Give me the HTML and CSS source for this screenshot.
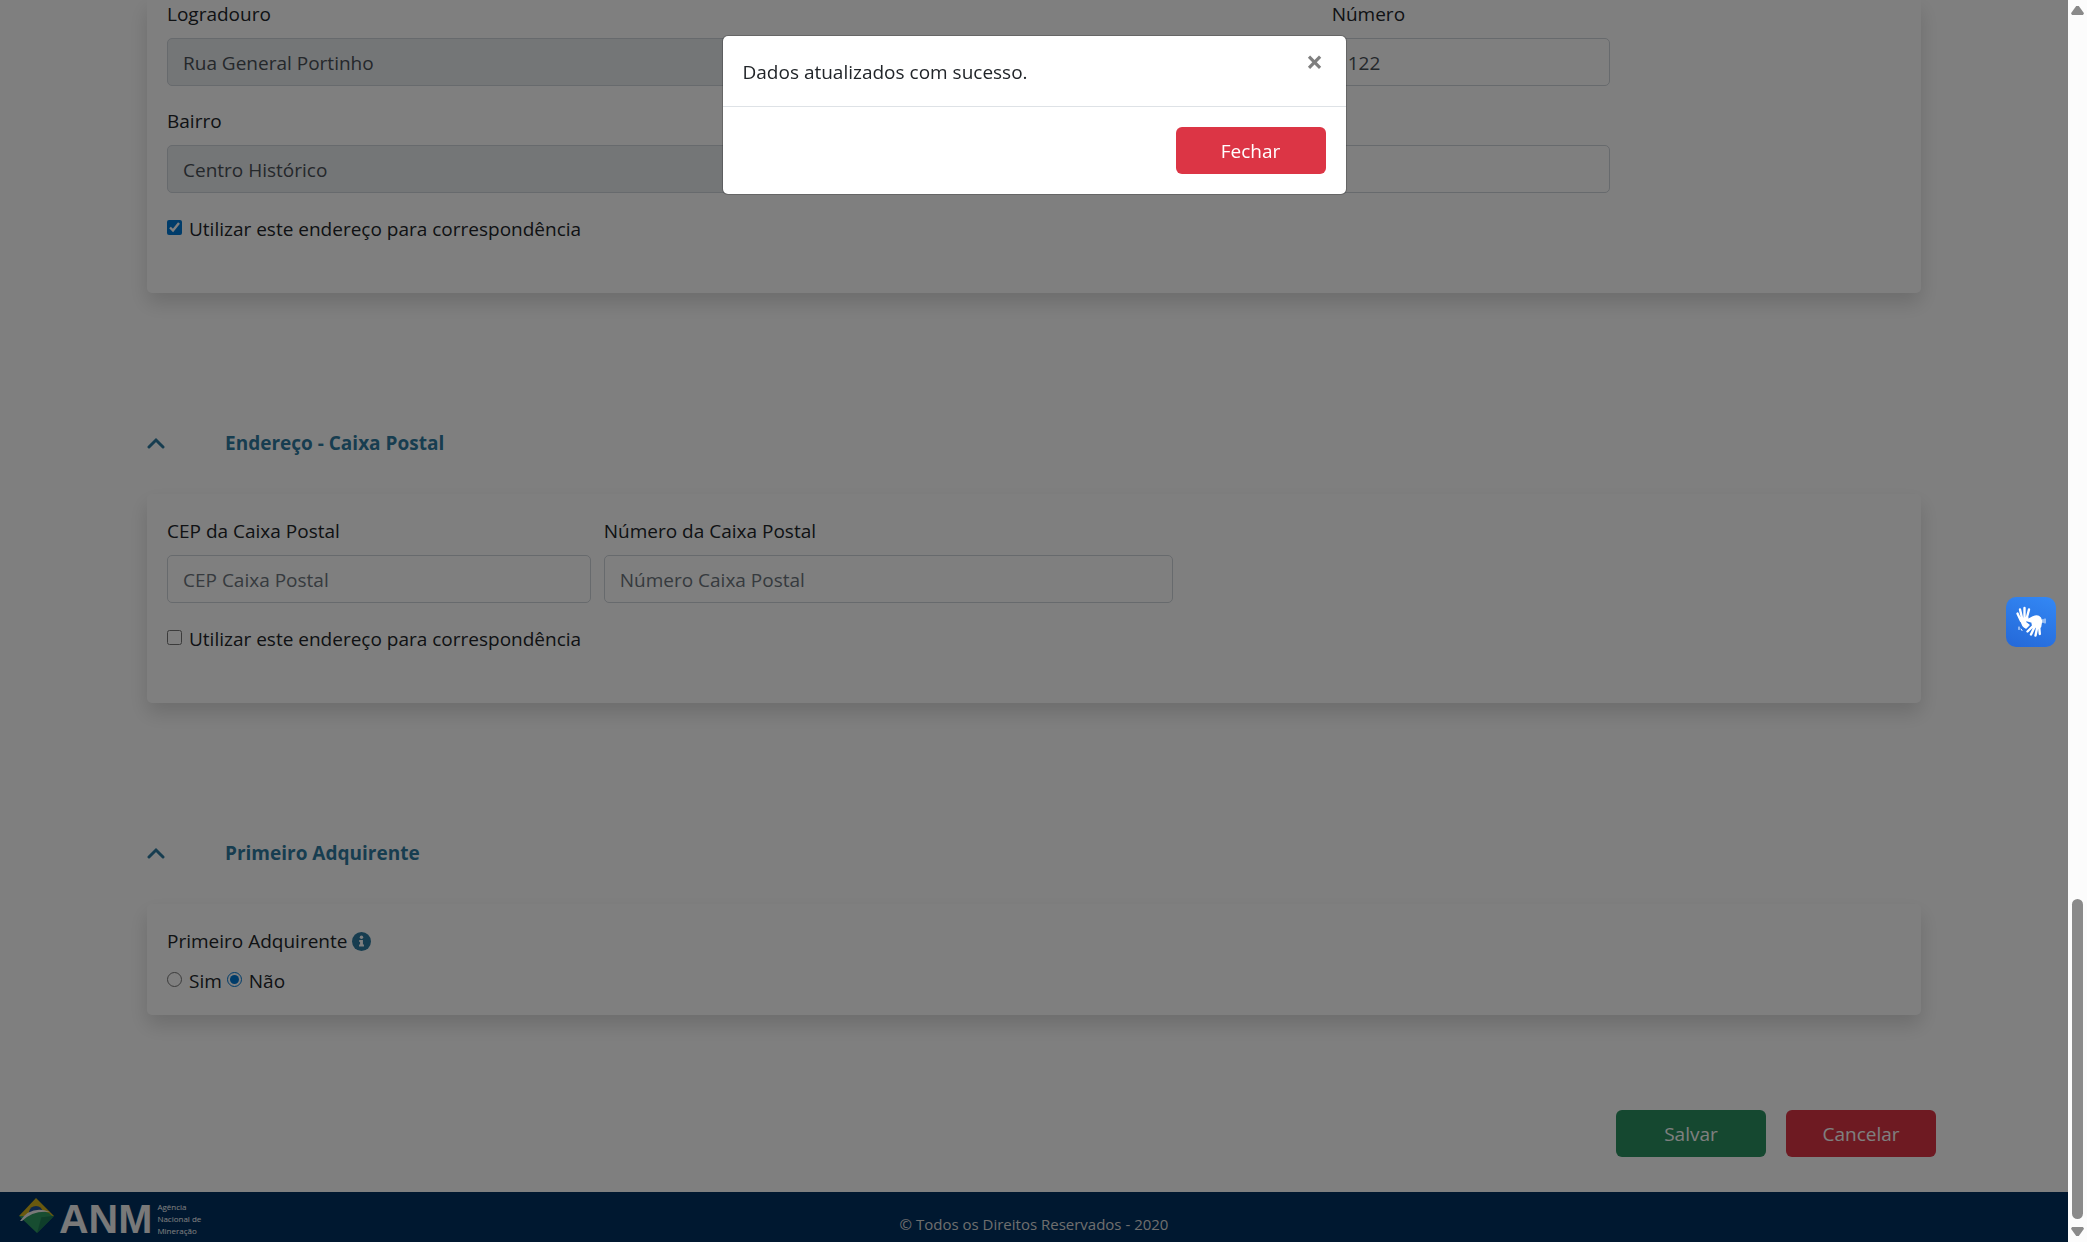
FILE: index.html
```html
<!DOCTYPE html>
<html lang="pt-BR">
<head>
  <meta charset="UTF-8">
  <title>ANM - Dados Cadastrais</title>
  <meta name="viewport" content="width=device-width, initial-scale=1.0">
  <link rel="stylesheet" href="styles.css">
</head>
<body>
<main class="content">

  <!-- Endereço -->
  <section class="card card-address">
    <div class="form-row">
      <div class="field col-8">
        <label for="logradouro">Logradouro</label>
        <input type="text" id="logradouro" class="form-control" value="Rua General Portinho" disabled>
      </div>
      <div class="field col-2">
        <label for="numero">Número</label>
        <input type="text" id="numero" class="form-control" value="122">
      </div>
    </div>
    <div class="form-row">
      <div class="field col-6">
        <label for="bairro">Bairro</label>
        <input type="text" id="bairro" class="form-control" value="Centro Histórico" disabled>
      </div>
      <div class="field col-4">
        <label for="complemento">Complemento</label>
        <input type="text" id="complemento" class="form-control">
      </div>
    </div>
    <div class="check">
      <input type="checkbox" id="corresp-endereco" checked>
      <label for="corresp-endereco">Utilizar este endereço para correspondência</label>
    </div>
  </section>

  <!-- Caixa Postal -->
  <h2 class="section-title">
    <svg class="chevron" viewBox="0 0 18 12"><path d="M2 10 L9 3 L16 10"/></svg>
    Endereço - Caixa Postal
  </h2>
  <section class="card">
    <div class="form-row">
      <div class="field col-3">
        <label for="cep-caixa">CEP da Caixa Postal</label>
        <input type="text" id="cep-caixa" class="form-control" placeholder="CEP Caixa Postal">
      </div>
      <div class="field col-4">
        <label for="numero-caixa">Número da Caixa Postal</label>
        <input type="text" id="numero-caixa" class="form-control" placeholder="Número Caixa Postal">
      </div>
    </div>
    <div class="check">
      <input type="checkbox" id="corresp-caixa">
      <label for="corresp-caixa">Utilizar este endereço para correspondência</label>
    </div>
  </section>

  <!-- Primeiro Adquirente -->
  <h2 class="section-title">
    <svg class="chevron" viewBox="0 0 18 12"><path d="M2 10 L9 3 L16 10"/></svg>
    Primeiro Adquirente
  </h2>
  <section class="card card-buyer">
    <div class="buyer-label">
      Primeiro Adquirente
      <svg class="info" viewBox="0 0 20 20">
        <circle cx="10" cy="10" r="10" fill="#2f7ba0"/>
        <circle cx="10" cy="5.6" r="1.8" fill="#fff"/>
        <path d="M7.6 8.4h3.9v4.8h1.1v2H7.4v-2h1.1v-2.8h-.9z" fill="#fff"/>
      </svg>
    </div>
    <div class="radios">
      <input type="radio" name="adquirente" id="adq-sim">
      <label for="adq-sim">Sim</label>
      <input type="radio" name="adquirente" id="adq-nao" checked>
      <label for="adq-nao">Não</label>
    </div>
  </section>

  <div class="actions">
    <button type="button" class="btn btn-success">Salvar</button>
    <button type="button" class="btn btn-danger">Cancelar</button>
  </div>
</main>

<footer class="footer">
  <div class="logo">
    <svg class="logo-mark" viewBox="0 0 36 38">
      <path d="M1 19 L18 1 L36 19 Z" fill="#d2b31c"/>
      <path d="M1 19 L36 19 L19 36 Z" fill="#2f9a62"/>
      <path d="M19 36 L24 18 L36 19 Z" fill="#1f7d55"/>
      <path d="M11 15 Q12 9 18 9 Q24 9 25 16 L22 19 L12 19 Z" fill="#1d4f94"/>
      <path d="M8 19 Q20 12 31 16 L34 19 L26 20 L8 21 Z" fill="#2f9a62"/>
      <path d="M2 24 Q13 8 32 15 Q15 13 4 24 Z" fill="#f2f2f2"/>
    </svg>
    <span class="logo-name">ANM</span>
    <span class="logo-text">Agência<br>Nacional de<br>Mineração</span>
  </div>
  <p class="copyright">© Todos os Direitos Reservados - 2020</p>
</footer>

<!-- Modal -->
<div class="backdrop">
  <div class="modal" role="dialog" aria-modal="true">
    <div class="modal-header">
      <span>Dados atualizados com sucesso.</span>
      <button type="button" class="close" aria-label="Fechar janela">×</button>
    </div>
    <div class="modal-footer">
      <button type="button" class="btn btn-danger">Fechar</button>
    </div>
  </div>
</div>

<!-- Libras -->
<button type="button" class="libras" aria-label="Libras">
  <svg viewBox="0 0 50 50" fill="none" stroke="#fff" stroke-linecap="round" stroke-linejoin="round">
    <path d="M15 24 L11.500 16.500 M16.500 23 L14 12.500 M18.500 22 L18.500 11 M20.500 22 L23 12.500" stroke-width="2.400"/>
    <path d="M15 22 L22 21 L19 25 L23 28 L20 31 Q16 30 15 22 Z" fill="#fff" stroke-width="1.500"/>
    <path d="M28 28 L21.500 34.500 M29 29 L25 37.500 M31.500 29 L29.500 38.500 M33 28 L33.800 37" stroke-width="2.400"/>
    <path d="M20.500 23.500 L27 20 Q34 17 35.500 24 L34.500 30 L27 30 L26 25 Z" fill="#fff" stroke-width="1.500"/>
    <path d="M13 30 L13 32.500 M15 32 L16 33.500 M37 22.500 V25.500 M39 22 V26" stroke-width="1"/>
  </svg>
</button>

<!-- Barra de rolagem -->
<div class="scrollbar">
  <span class="arrow arrow-up"></span>
  <span class="thumb"></span>
  <span class="arrow arrow-down"></span>
</div>
</body>
</html>
```

FILE: styles.css
```css
* { box-sizing: border-box; }
body {
  margin: 0;
  padding-right: 19px;
  min-height: 100vh;
  display: flex;
  flex-direction: column;
  background: #fff;
  color: #212529;
  font-family: "Open Sans", "Noto Sans", sans-serif;
  font-size: 19px;
  line-height: 30px;
}
input, button { font: inherit; }
label { display: block; }

.content { flex: 1; padding: 0 147px; }

/* cards */
.card {
  padding: 23px 20px 49px;
  background: #fff;
  border-radius: 5px;
  box-shadow: 0 10px 20px rgba(0, 0, 0, .15);
}
.card-address { padding-top: 0; border-radius: 0 0 5px 5px; }
.card-buyer { padding-bottom: 19px; }

.section-title {
  display: flex;
  align-items: center;
  gap: 60px;
  margin: 135px 0 36px;
  color: #2f7ba0;
  font-size: 19px;
  font-weight: 700;
}
.chevron { width: 18px; height: 12px; fill: none; stroke: #2f7ba0; stroke-width: 3; stroke-linecap: round; }

/* form */
.form-row { display: grid; grid-template-columns: repeat(12, 1fr); gap: 13px; margin-bottom: 21px; }
.field label { margin-bottom: 10px; line-height: 28px; }
.col-2 { grid-column: span 2; }
.col-3 { grid-column: span 3; }
.col-4 { grid-column: span 4; }
.col-6 { grid-column: span 6; }
.col-8 { grid-column: span 8; }
.form-control {
  display: block;
  width: 100%;
  height: 48px;
  padding: 1px 15px 0;
  border: 1px solid #ced4da;
  border-radius: 5px;
  background: #fff;
  color: #495057;
}
.form-control:disabled { background: #e9ecef; }
.form-control::placeholder { color: #6c757d; opacity: 1; }

.check, .radios { display: flex; align-items: center; }
.check input, .radios input { width: 15px; height: 15px; margin: 0 7px 3px 0; accent-color: #0078d4; }
.radios { margin-top: 11px; }
.radios label { margin-right: 5px; }
.buyer-label { display: flex; align-items: center; gap: 5px; line-height: 28px; }
.info { width: 19px; height: 19px; }

/* buttons */
.actions { display: flex; justify-content: flex-end; gap: 20px; margin: 95px -15px 35px 0; }
.btn {
  width: 150px;
  height: 47px;
  padding: 1px 0 0;
  border: 0;
  border-radius: 6px;
  color: #fff;
}
.btn-success { background: #2a9060; }
.btn-danger { background: #dc3545; }

/* footer */
.footer {
  display: grid;
  grid-template-columns: 1fr auto 1fr;
  height: 50px;
  padding: 0 18px;
  background: #003060;
  color: #fff;
}
.logo { display: flex; align-items: center; padding-top: 3px; }
.logo-mark { width: 36px; height: 38px; margin: 0 5px 6px 0; }
.logo-name { margin-right: 5px; color: #f2f2f2; font-family: "Liberation Sans", sans-serif; font-size: 41px; font-weight: 700; }
.logo-text { font-size: 8px; line-height: 12px; }
.copyright { margin: 17px 0 0; font-size: 15px; color: #ddd; }

/* modal */
.backdrop { position: fixed; top: 0; right: 19px; bottom: 0; left: 0; background: rgba(0, 0, 0, .5); }
.modal {
  width: 625px;
  margin: 35px auto;
  background: #fff;
  background-clip: padding-box;
  border: 1px solid rgba(0, 0, 0, .2);
  border-radius: 6px;
}
.modal-header {
  display: flex;
  justify-content: space-between;
  padding: 21px 20px 19px;
  border-bottom: 1px solid #dee2e6;
}
.close {
  width: 22px;
  height: 30px;
  margin-top: -10px;
  padding: 0;
  border: 0;
  background: none;
  color: #7f7f7f;
  font-size: 30px;
  font-weight: 700;
  line-height: 30px;
}
.modal-footer { display: flex; justify-content: flex-end; padding: 20px; }

.libras {
  position: fixed;
  top: calc(50% - 24px);
  right: 31px;
  width: 50px;
  height: 50px;
  padding: 0;
  border: 0;
  border-radius: 10px;
  background: linear-gradient(20deg, #2468d8, #3388f5);
}
.libras svg { display: block; }

/* scrollbar */
.scrollbar {
  position: fixed;
  top: 0;
  right: 0;
  bottom: 0;
  width: 19px;
  padding: 6px 3px;
  display: flex;
  flex-direction: column;
  align-items: center;
  background: #fcfcfc;
}
.thumb { width: 11px; height: 26%; margin: auto 0 8px; border-radius: 6px; background: #8a8a8a; }
.arrow { width: 13px; height: 9px; background: #8a8a8a; }
.arrow-up { clip-path: polygon(40% 0, 60% 0, 100% 80%, 92% 100%, 8% 100%, 0 80%); }
.arrow-down { clip-path: polygon(8% 0, 92% 0, 100% 20%, 60% 100%, 40% 100%, 0 20%); }
```
